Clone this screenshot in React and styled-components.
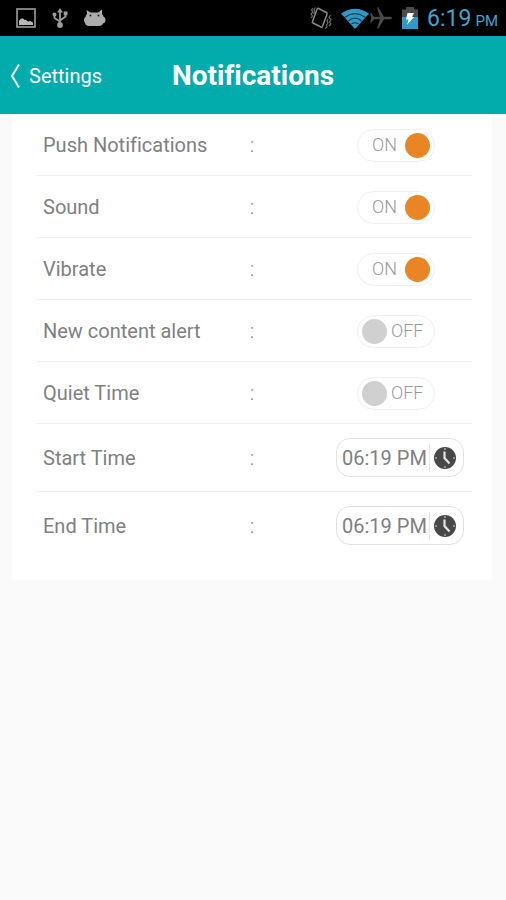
import React, { useState } from 'react';
import styled, { createGlobalStyle } from 'styled-components';

const initialSettings = [
  { id: 'push', label: 'Push Notifications', on: true },
  { id: 'sound', label: 'Sound', on: true },
  { id: 'vibrate', label: 'Vibrate', on: true },
  { id: 'content', label: 'New content alert', on: false },
  { id: 'quiet', label: 'Quiet Time', on: false },
];

const initialTimes = [
  { id: 'start', label: 'Start Time', value: '06:19 PM' },
  { id: 'end', label: 'End Time', value: '06:19 PM' },
];

const PictureIcon = () => (
  <svg width="20" height="20" viewBox="0 0 20 20">
    <rect x="1" y="1" width="18" height="18" fill="none" stroke="#8c8c8c" strokeWidth="1.800" />
    <path d="M3 17v-4q0-1 1-1 .5-2 2-1.500Q8 10 8.500 12q1.500-.5 2.500.8 1 1 2 .5 1.500-1 2.500.5 1.500 0 1.500 1.500V17z" fill="#b8b8b8" />
  </svg>
);

const UsbIcon = () => (
  <svg width="16" height="20" viewBox="0 0 16 20" fill="none" stroke="#9c9c9c" strokeWidth="1.800">
    <path d="M8 3v14M8 13.500L2.500 10V7M8 12.500l5.500-4V5" />
    <path d="M5 4.500L8 0l3 4.500z" fill="#9c9c9c" stroke="none" />
    <circle cx="2.500" cy="6.500" r="2" fill="#9c9c9c" stroke="none" />
    <rect x="11.700" y="3.500" width="3.800" height="3.800" fill="#9c9c9c" stroke="none" />
    <circle cx="8" cy="17" r="2.900" fill="#9c9c9c" stroke="none" />
  </svg>
);

const DroidIcon = () => (
  <svg width="22" height="18" viewBox="0 0 22 18">
    <g fill="#acacac">
      <path d="M2.500 1L8 4.500 3.500 8zM18 .5L13 4.500l5 3z" />
      <rect x="1.500" y="3.500" width="18" height="11" rx="5" />
      <rect x="0" y="7.500" width="21.500" height="7" rx="3.500" />
      <rect x="1" y="9" width="18" height="8" rx="4" />
    </g>
    <circle cx="6.500" cy="6.500" r="1" fill="#222" />
    <circle cx="14.500" cy="6.500" r="1" fill="#222" />
  </svg>
);

const VibrateIcon = () => (
  <svg width="22" height="24" viewBox="0 0 22 24" fill="none" stroke="#8a8a8a" strokeWidth="1.500">
    <path d="M8.500 2.500l8 4q1 .5.6 1.500l-4.600 12.500q-.5 1-1.500.5l-8-4q-1-.5-.5-1.500L7 3.200q.5-1.200 1.500-.7z" />
    <path
      d="M3 2L1.500 4 3 6 1 8l1.500 2L1 12M5.500 1.500L4 3.500 5 6 3.500 8M20.500 9L19 11.500l2 2-1.500 2.500 1.500 2-2 2M18 13l-1 2 1 2-1.500 2 .5 2-2 1.500"
      stroke="#6c6c6c"
      strokeWidth="1.200"
    />
  </svg>
);

const WifiIcon = () => (
  <svg width="28" height="21" viewBox="0 0 28 21">
    <path d="M0 5.500Q14-4 28 5.500L14 21z" fill="#2f9bc4" />
    <g fill="none" stroke="#0b3547" strokeWidth="1.200">
      <path d="M4 9.200q10-7 20 0M7.500 12.700q6.500-5 13 0M10.500 16q3.500-2.500 7 0" />
    </g>
  </svg>
);

const PlaneIcon = () => (
  <svg width="24" height="24" viewBox="0 0 24 24">
    <path
      d="M23 12q0-1.300-2.500-1.300H15L9.500 1.500H8l3 9.200H5L2.500 7.500H1L2.300 12 1 16.500h1.500L5 13.300h6l-3 9.200h1.500l5.500-9.200h5.500Q23 13.300 23 12z"
      fill="#4a4a4a"
    />
  </svg>
);

const BatteryIcon = () => (
  <svg width="16" height="22" viewBox="0 0 16 22">
    <path d="M4 0h8v2.500h4V22H0V2.500h4z" fill="#4b4b4b" />
    <path d="M0 10h16v12H0z" fill="#2f9bc4" />
    <path d="M5.500 6h6.500L10 10h2L5 18l1.500-5.500H4z" fill="#fff" />
  </svg>
);

const ChevronIcon = () => (
  <svg width="11" height="26" viewBox="0 0 11 26" fill="none" stroke="#fff" strokeWidth="2">
    <path d="M9 1.500L2 13l7 11.500" />
  </svg>
);

const ClockIcon = () => (
  <svg width="22" height="22" viewBox="0 0 22 22">
    <circle cx="11" cy="11" r="11" fill="#484848" />
    <path d="M11 1v2M11 19v2M1 11h2M19 11h2" stroke="#aaa" strokeWidth="1.500" />
    <path d="M10.500 4.500V11l5 5.500" fill="none" stroke="#e4e4e4" strokeWidth="2.200" />
  </svg>
);

const App = () => {
  const [settings, setSettings] = useState(initialSettings);
  const [times, setTimes] = useState(initialTimes);

  const toggle = (id) =>
    setSettings(prev => prev.map(s => (s.id === id ? { ...s, on: !s.on } : s)));

  const onTimeChange = (event) => {
    const { target: { name, value } } = event;
    setTimes(prev => prev.map(t => (t.id === name ? { ...t, value } : t)));
  };

  return (
    <>
      <GlobalStyle />
      <StatusBar>
        <StatusGroup $gap="16px">
          <PictureIcon />
          <UsbIcon />
          <DroidIcon />
        </StatusGroup>
        <StatusGroup>
          <VibrateIcon />
          <Signals>
            <WifiIcon />
            <PlaneIcon />
          </Signals>
          <BatteryIcon />
          <Clock>6:19<small>PM</small></Clock>
        </StatusGroup>
      </StatusBar>
      <Header>
        <BackLink href="#settings">
          <ChevronIcon />
          Settings
        </BackLink>
        <Title>Notifications</Title>
      </Header>
      <Card>
        {settings.map(({ id, label, on }) => (
          <Row key={id}>
            <label htmlFor={id}>{label}</label>
            <Colon>:</Colon>
            <Switch $on={on}>
              <SwitchInput id={id} type="checkbox" checked={on} onChange={() => toggle(id)} />
              <SwitchText htmlFor={id}>{on ? 'ON' : 'OFF'}</SwitchText>
            </Switch>
          </Row>
        ))}
        {times.map(({ id, label, value }) => (
          <Row key={id} $tall>
            <label htmlFor={id}>{label}</label>
            <Colon>:</Colon>
            <TimeBox>
              <TimeInput id={id} name={id} type="text" value={value} onChange={onTimeChange} />
              <TimeButton type="button" aria-label={label}>
                <ClockIcon />
              </TimeButton>
            </TimeBox>
          </Row>
        ))}
      </Card>
    </>
  );
};

const GlobalStyle = createGlobalStyle`
  * {
    box-sizing: border-box;
  }

  body {
    margin: 0;
    background-color: #fafafa;
    color: #808080;
    font-family: Roboto, sans-serif;
    font-size: 20px;
    line-height: 24px;
    font-variant-ligatures: none;
  }

  svg {
    display: block;
    flex: none;
  }
`;

const StatusBar = styled.div`
  display: flex;
  align-items: center;
  justify-content: space-between;
  height: 36px;
  padding: 0 8px 0 16px;
  background-color: #000;
`;

const StatusGroup = styled.div`
  display: flex;
  align-items: center;
  gap: ${props => props.$gap || '9px'};
`;

const Signals = styled.div`
  display: flex;
  align-items: center;
`;

const Clock = styled.span`
  display: flex;
  align-items: baseline;
  gap: 4px;
  padding-top: 4px;
  font-size: 23px;
  color: #3da5d0;

  small {
    font-size: 15px;
  }
`;

const Header = styled.header`
  display: grid;
  grid-template-columns: 1fr auto 1fr;
  align-items: center;
  height: 78px;
  padding: 2px 10px 0;
  background-color: #02abac;
  color: #fff;
`;

const BackLink = styled.a`
  display: flex;
  align-items: center;
  gap: 8px;
  color: #fff;
  text-decoration: none;
`;

const Title = styled.h1`
  margin: 0;
  font-size: 28px;
  line-height: 32px;
  font-weight: 700;
`;

const Card = styled.main`
  margin: 0 14px 0 12px;
  padding: 0 20px 20px 24px;
  background-color: #fff;
  border-radius: 0 0 4px 4px;
`;

const Row = styled.div`
  display: grid;
  grid-template-columns: 1fr 86px 128px;
  align-items: center;
  height: ${props => (props.$tall ? '68px' : '62px')};
  padding: ${props => (props.$tall ? '0 8px 0 7px' : '1px 8px 0 7px')};
  border-bottom: 1px solid #f2f2f2;

  &:last-child {
    border-bottom-color: transparent;
  }
`;

const Colon = styled.span`
  font-weight: 300;
`;

const Switch = styled.div`
  display: flex;
  flex-direction: ${props => (props.$on ? 'row-reverse' : 'row')};
  align-items: center;
  justify-self: end;
  gap: ${props => (props.$on ? '8px' : '4px')};
  width: 78px;
  height: 33px;
  margin-right: 29px;
  padding: 0 4px;
  border: 1px solid #f0f0f0;
  border-radius: 17px;
`;

const SwitchInput = styled.input`
  appearance: none;
  flex: none;
  width: 25px;
  height: 25px;
  margin: 0;
  border-radius: 50%;
  background-color: #d0d0d0;
  cursor: pointer;

  &:checked {
    background-color: #ea8526;
  }
`;

const SwitchText = styled.label`
  font-size: 18px;
  font-weight: 300;
  color: #999;
  cursor: pointer;
`;

const TimeBox = styled.div`
  display: flex;
  align-items: center;
  height: 39px;
  border: 1px solid #e2e2e2;
  border-radius: 14px;
`;

const TimeInput = styled.input`
  flex: 1;
  min-width: 0;
  height: 28px;
  padding: 0 0 0 5px;
  border: none;
  border-right: 1px solid #e6e6e6;
  background: none;
  color: inherit;
  font: inherit;
`;

const TimeButton = styled.button`
  width: 33px;
  padding: 0 4px;
  border: none;
  background: none;
  cursor: pointer;
`;

export default App;
